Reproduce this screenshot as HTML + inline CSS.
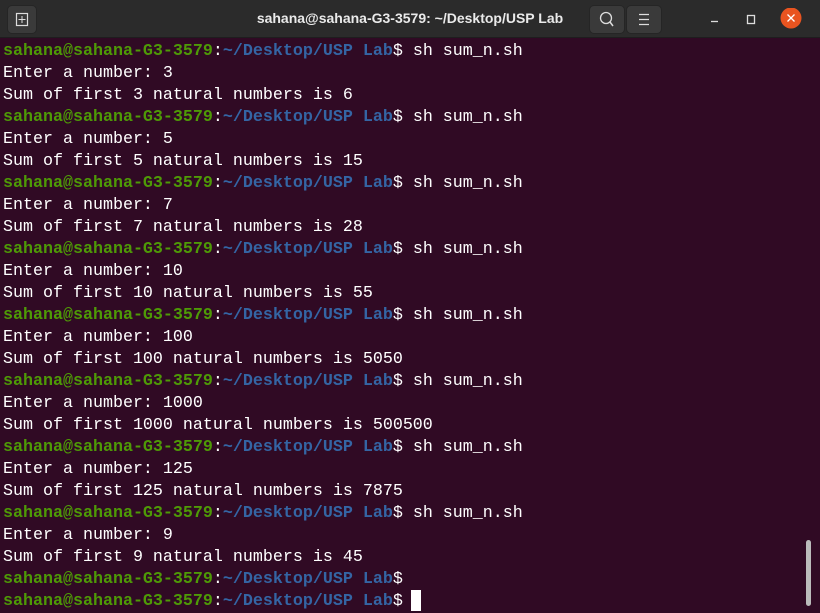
<!DOCTYPE html>
<html><head><style>
html,body{margin:0;padding:0;width:820px;height:613px;overflow:hidden;background:#300a24;}
#tb{position:absolute;left:0;top:0;width:820px;height:37px;background:#2b2b2b;border-bottom:1px solid #1e1e1e;}
.btn{position:absolute;top:5px;height:27px;background:#3a3a3a;border-radius:5px;border:1px solid #252525;}
#title{position:absolute;left:0;width:820px;top:10px;text-align:center;color:#eaeaea;font:bold 14px "Liberation Sans",sans-serif;}
#term{position:absolute;left:3px;top:41px;font-family:"Liberation Mono",monospace;font-size:16.67px;line-height:22px;color:#ffffff;white-space:pre;}
.g{color:#4e9a06;font-weight:bold}.b{color:#3465a4;font-weight:bold}
</style></head><body>
<div id="tb">
<div class="btn" style="left:7px;width:28px"><svg width="28" height="27"><rect x="8.5" y="7.5" width="11" height="12" fill="none" stroke="#ddd" stroke-width="1.2"/><line x1="14" y1="10" x2="14" y2="17" stroke="#ddd"/><line x1="10.5" y1="13.5" x2="17.5" y2="13.5" stroke="#ddd"/></svg></div>
<div id="title">sahana@sahana-G3-3579: ~/Desktop/USP Lab</div>
<div class="btn" style="left:589px;width:34px"><svg width="34" height="27"><circle cx="16" cy="12" r="5.5" fill="none" stroke="#ddd" stroke-width="1.3"/><line x1="20" y1="16" x2="23" y2="20" stroke="#ddd" stroke-width="1.5"/></svg></div>
<div class="btn" style="left:626px;width:34px"><svg width="34" height="27"><path d="M12 8.5h10M12 13.5h10M12 18.5h10" stroke="#ddd" stroke-width="1.3"/></svg></div>
<svg style="position:absolute;left:700px;top:8px" width="110" height="22"><line x1="11" y1="13.5" x2="18" y2="13.5" stroke="#ddd" stroke-width="1.3"/><rect x="47.5" y="7.5" width="7" height="8" fill="none" stroke="#ddd" stroke-width="1.3"/><circle cx="91" cy="10" r="10.5" fill="#e95420"/><path d="M87.5 6.5l7 7M94.5 6.5l-7 7" stroke="#fff" stroke-width="1.3"/></svg>
</div>
<div id="term"><span class="g">sahana@sahana-G3-3579</span>:<span class="b">~/Desktop/USP Lab</span>$ sh sum_n.sh
Enter a number: 3
Sum of first 3 natural numbers is 6
<span class="g">sahana@sahana-G3-3579</span>:<span class="b">~/Desktop/USP Lab</span>$ sh sum_n.sh
Enter a number: 5
Sum of first 5 natural numbers is 15
<span class="g">sahana@sahana-G3-3579</span>:<span class="b">~/Desktop/USP Lab</span>$ sh sum_n.sh
Enter a number: 7
Sum of first 7 natural numbers is 28
<span class="g">sahana@sahana-G3-3579</span>:<span class="b">~/Desktop/USP Lab</span>$ sh sum_n.sh
Enter a number: 10
Sum of first 10 natural numbers is 55
<span class="g">sahana@sahana-G3-3579</span>:<span class="b">~/Desktop/USP Lab</span>$ sh sum_n.sh
Enter a number: 100
Sum of first 100 natural numbers is 5050
<span class="g">sahana@sahana-G3-3579</span>:<span class="b">~/Desktop/USP Lab</span>$ sh sum_n.sh
Enter a number: 1000
Sum of first 1000 natural numbers is 500500
<span class="g">sahana@sahana-G3-3579</span>:<span class="b">~/Desktop/USP Lab</span>$ sh sum_n.sh
Enter a number: 125
Sum of first 125 natural numbers is 7875
<span class="g">sahana@sahana-G3-3579</span>:<span class="b">~/Desktop/USP Lab</span>$ sh sum_n.sh
Enter a number: 9
Sum of first 9 natural numbers is 45
<span class="g">sahana@sahana-G3-3579</span>:<span class="b">~/Desktop/USP Lab</span>$
<span class="g">sahana@sahana-G3-3579</span>:<span class="b">~/Desktop/USP Lab</span>$ </div>
<div style="position:absolute;left:411px;top:590px;width:10px;height:21px;background:#fff"></div>
<div style="position:absolute;left:806px;top:540px;width:5px;height:66px;background:#bbb;border-radius:3px"></div>
</body></html>
